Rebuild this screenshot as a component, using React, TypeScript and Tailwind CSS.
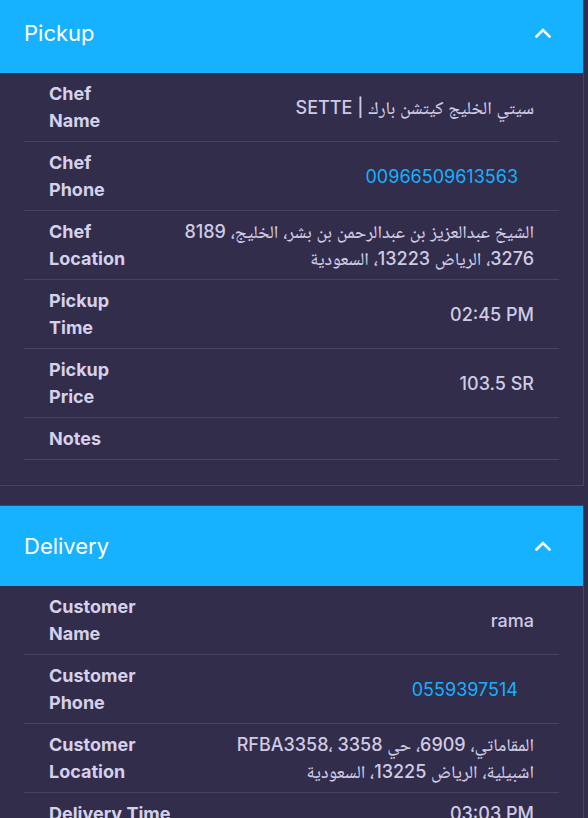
import React from 'react';

type Row = { label: string; value?: string; phone?: boolean };

const pickupRows: Row[] = [
  { label: 'Chef Name', value: 'سيتي الخليج كيتشن بارك | SETTE' },
  { label: 'Chef Phone', value: '00966509613563', phone: true },
  { label: 'Chef Location', value: 'الشيخ عبدالعزيز بن عبدالرحمن بن بشر، الخليج، 8189 3276، الرياض 13223، السعودية' },
  { label: 'Pickup Time', value: '02:45 PM' },
  { label: 'Pickup Price', value: '103.5 SR' },
  { label: 'Notes', value: '' },
];

const deliveryRows: Row[] = [
  { label: 'Customer Name', value: 'rama' },
  { label: 'Customer Phone', value: '0559397514', phone: true },
  { label: 'Customer Location', value: 'المقاماتي، 6909، حي 3358 ،RFBA3358 اشبيلية، الرياض 13225، السعودية' },
  { label: 'Delivery Time', value: '03:03 PM' },
  { label: 'Delivery Price', value: '15 SR' },
  { label: 'Notes', value: '' },
];

function Chevron() {
  return (
    <svg width="16" height="10" viewBox="0 0 16 10" fill="none">
      <polyline points="1.5,8.5 8,2 14.5,8.5" stroke="white" strokeWidth="2.6" strokeLinecap="square" />
    </svg>
  );
}

function Section({ title, rows, labelW }: { title: string; rows: Row[]; labelW: string }) {
  return (
    <div className="w-[584px] border-t border-r border-b border-[#48435f] bg-[#312d4b] pb-[25px]">
      <div className="h-[80px] bg-[#16b1ff] flex items-center justify-between pl-6 pr-[32px]">
        <span className="text-white text-[22px] leading-none">{title}</span>
        <Chevron />
      </div>
      <div className="mx-6">
        {rows.map((r, i) => (
          <div key={i} className="flex items-center border-b border-[#48435f] px-[25px] py-[7px]">
            <div className={`${labelW} shrink-0 text-[18px] leading-[27px] font-bold text-[#d5d1ea]`}>{r.label}</div>
            <div className="flex-1 pl-6 text-right text-[18px] leading-[27px] font-medium text-[#cfcbe4]">
              {r.phone ? (
                <span className="pr-4 font-normal text-[#16b1ff]">{r.value}</span>
              ) : (
                <div dir="auto" className="text-right">{r.value}</div>
              )}
            </div>
          </div>
        ))}
      </div>
    </div>
  );
}

export default function App() {
  return (
    <div className="min-h-screen bg-[#312d4b] font-['Inter','Noto_Naskh_Arabic','Noto_Sans_Arabic','DejaVu_Sans_Condensed',sans-serif] overflow-hidden">
      <div className="-mt-[8px] flex flex-col gap-[19px]">
        <Section title="Pickup" rows={pickupRows} labelW="w-[85px]" />
        <Section title="Delivery" rows={deliveryRows} labelW="w-[130px]" />
      </div>
    </div>
  );
}
